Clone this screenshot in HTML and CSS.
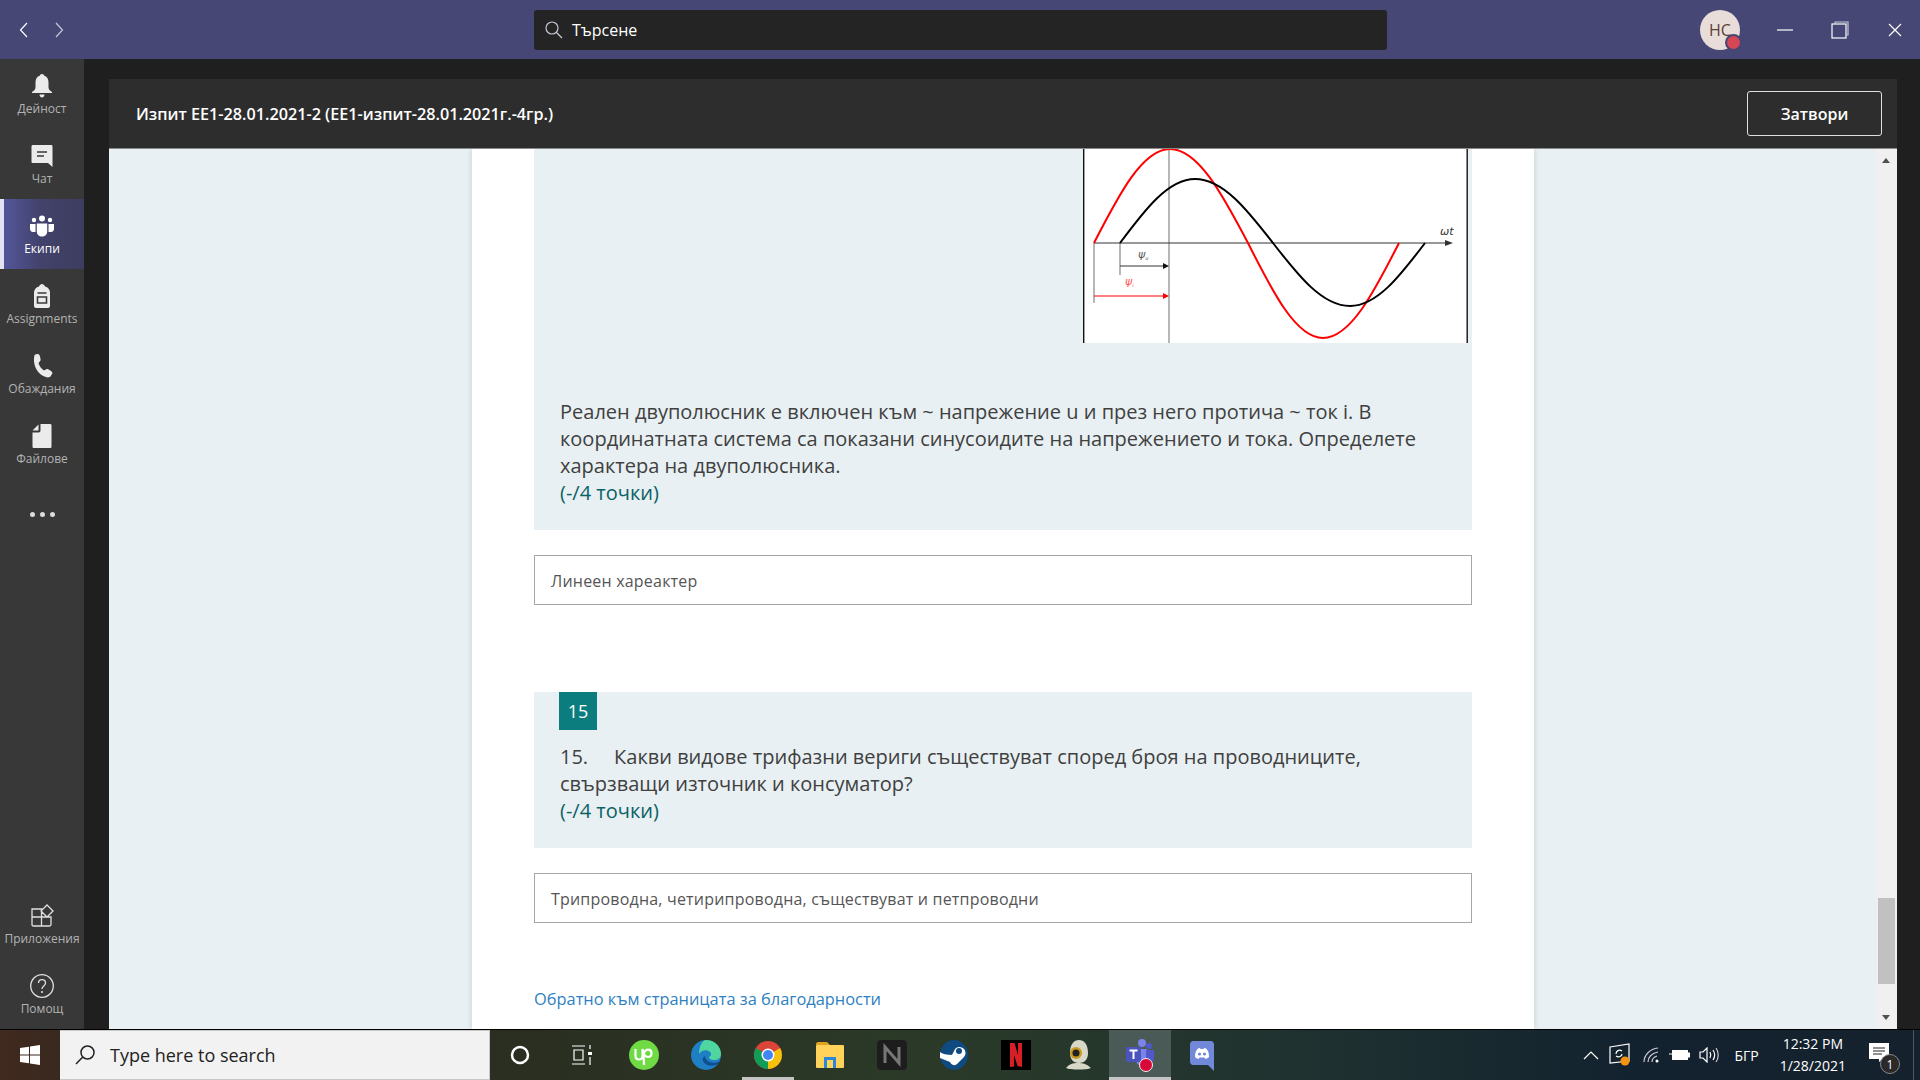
FILE: index.html
```html
<!DOCTYPE html>
<html lang="bg">
<head>
<meta charset="UTF-8">
<meta name="viewport" content="width=device-width, initial-scale=1.0">
<title>Изпит EE1</title>
<link rel="stylesheet" href="styles.css">
</head>
<body>

<!-- Горна лента -->
<header class="topbar">
	<div class="nav-arrows">
		<svg width="12" height="18" viewBox="0 0 12 18"><path d="M9 2 2.5 9 9 16" class="line-white"/></svg>
		<svg width="12" height="18" viewBox="0 0 12 18"><path d="M3 2 9.5 9 3 16" class="line-dim"/></svg>
	</div>
	<div class="search">
		<svg width="20" height="20" viewBox="0 0 20 20"><circle cx="8" cy="8" r="6" class="line-dim"/><path d="M12.5 12.5 18 18" class="line-dim"/></svg>
		<span>Търсене</span>
	</div>
	<div class="avatar">НС<span class="status"></span></div>
	<div class="win-buttons">
		<svg width="16" height="16" viewBox="0 0 16 16"><path d="M0 8H16" class="line-white"/></svg>
		<svg width="18" height="18" viewBox="0 0 18 18"><rect x="1" y="3" width="14" height="14" class="line-white"/><path d="M4 3V1H17V14H15" class="line-dim"/></svg>
		<svg width="16" height="16" viewBox="0 0 16 16"><path d="M2 2 14 14M14 2 2 14" class="line-white"/></svg>
	</div>
</header>

<div class="app">
	<!-- Странична лента -->
	<nav class="sidebar">
		<div class="nav-item">
			<svg class="nav-icon" viewBox="0 0 24 24"><path d="M12 0c1.300 0 2 .8 2 1.500 3 1 4.500 3.500 4.500 7v5c0 2 1.500 3 3.500 4.500v1H2v-1c2-1.500 3.500-2.500 3.500-4.500v-5c0-3.500 1.500-6 4.500-7C10 .8 10.700 0 12 0zM9.500 20.500h5c0 1.500-1 3-2.500 3s-2.500-1.500-2.500-3z" class="fill-icon"/></svg>
			<span>Дейност</span>
		</div>
		<div class="nav-item">
			<svg class="nav-icon" viewBox="0 0 24 24"><path d="M3 1h18c1 0 1.500.5 1.500 1.500V23l-4.500-4H3c-1 0-1.500-.5-1.500-1.500v-15C1.500 1.500 2 1 3 1z" class="fill-icon"/><path d="M7 8h10M7 12h7" class="line-side"/></svg>
			<span>Чат</span>
		</div>
		<div class="nav-item active">
			<svg class="nav-icon" viewBox="0 0 24 24"><circle cx="12" cy="4.500" r="3" fill="#fff"/><circle cx="4" cy="6" r="2.200" fill="#fff"/><circle cx="20" cy="6" r="2.200" fill="#fff"/><path d="M6.800 9.500h10.400v8c0 3-2.300 5-5.200 5s-5.200-2-5.200-5z" fill="#fff"/><path d="M0 10h5.500v8H3c-2 0-3-1.500-3-3zM24 10h-5.500v8H21c2 0 3-1.500 3-3z" fill="#fff"/></svg>
			<span>Екипи</span>
		</div>
		<div class="nav-item">
			<svg class="nav-icon" viewBox="0 0 24 24"><path d="M9 2.500C9.500 1 11 0 12 0s2.500 1 3 2.500c3 .8 5 3 5 6V22c0 1-1 2-2 2H6c-1 0-2-1-2-2V8.500c0-3 2-5.200 5-6z" class="fill-icon"/><path d="M7.500 9h9M7.500 13h9v6h-9z" class="line-side"/></svg>
			<span>Assignments</span>
		</div>
		<div class="nav-item">
			<svg class="nav-icon" viewBox="0 0 24 24"><path d="M5 .5 8 0c1 0 1.500 1 2 2.500.5 2 1 3.500.2 4.500L8.500 9c.5 2.500 3 6 5.500 7.500l2.300-1.300c1-.5 2.500.2 4 1.300 1.500 1 2.500 2 2 3l-1.500 2.500c-1 1.500-3 1.800-5 1C9 21 4.500 14.500 4 7c-.1-2.500 0-5.500 1-6.500z" class="fill-icon"/></svg>
			<span>Обаждания</span>
		</div>
		<div class="nav-item">
			<svg class="nav-icon" viewBox="0 0 24 24"><path d="M10.500 0H20c1 0 1.500.5 1.500 1.500v21c0 1-.5 1.500-1.500 1.500H4c-1 0-1.500-.5-1.500-1.500V8.500h6c1.300 0 2-.7 2-2z" class="fill-icon"/><path d="M8.500 .5v6h-6z" class="fill-icon"/></svg>
			<span>Файлове</span>
		</div>
		<div class="nav-item more"><i></i><i></i><i></i></div>

		<div class="nav-item push">
			<svg class="nav-icon" viewBox="0 0 24 24"><path d="M2 5h9.500v8H2zM2 13h9.500v9H3.500C2.500 22 2 21.500 2 20.500zM11.500 13H21v7.500c0 1-.5 1.500-1.500 1.500h-8zM17 1l6 6-6 6-6-6z" class="line-icon"/></svg>
			<span>Приложения</span>
		</div>
		<div class="nav-item">
			<svg class="nav-icon" viewBox="0 0 24 24"><circle cx="12" cy="12" r="11.300" class="line-icon"/><path d="M8.500 9c0-2 1.500-3.300 3.500-3.300s3.500 1.300 3.500 3.200c0 3-3.500 3-3.500 6" class="line-icon"/><circle cx="12" cy="18" r="1" class="fill-icon"/></svg>
			<span>Помощ</span>
		</div>
	</nav>

	<main class="main">
		<div class="panel">
			<div class="panel-head">
				<div class="panel-title">Изпит EE1-28.01.2021-2 (EE1-изпит-28.01.2021г.-4гр.)</div>
				<button class="close-btn">Затвори</button>
			</div>
			<div class="panel-body">
				<div class="page">
					<div class="card">

						<div class="question">
							<div class="figure">
								<svg width="385" height="194" viewBox="0 0 385 194">
									<path d="M.7 0V194M384.200 0V194" class="fig-frame"/>
									<path d="M86 0V194M11 94V154M37 94V126" class="fig-grid"/>
									<path d="M11 94H365" class="fig-axis"/>
									<path d="M370 94 362 91V97z" fill="#333"/>
									<path d="M37 117H80" class="fig-axis"/>
									<path d="M86 117 80 114V120z" fill="#111"/>
									<path d="M11 147H80" class="fig-red-thin"/>
									<path d="M86 147 80 144V150z" fill="#f00"/>
									<path d="M11 94C35.800 45.800 59.500 0 87 0 115.200 0 139.600 45.800 165 94 189.500 142.700 212.900 189 240 189 267.500 189 291.200 142.700 316 94" class="fig-red"/>
									<path d="M37 94C61.500 61.200 84.900 30 112 30 140.200 30 164.600 61.200 190 94 215.100 126.300 239.100 157 267 157 294.100 157 317.500 126.300 342 94" class="fig-black"/>
									<text x="55" y="109" class="fig-label">ψ<tspan class="fig-sub" dy="2">u</tspan></text>
									<text x="42" y="136" class="fig-label fig-label-red">ψ<tspan class="fig-sub" dy="2">i</tspan></text>
									<text x="357" y="86" class="fig-wt">ωt</text>
								</svg>
							</div>
							<div class="q-text q-text-first">
								Реален двуполюсник е включен към ~ напрежение u и през него протича ~ ток i. В координатната система са показани синусоидите на напрежението и тока. Определете характера на двуполюсника.
								<div class="points">(-/4 точки)</div>
							</div>
						</div>
						<div class="answer">Линеен хареактер</div>

						<div class="question question-two">
							<div class="badge">15</div>
							<div class="q-text">
								15.&nbsp;&nbsp;&nbsp;&nbsp; Какви видове трифазни вериги съществуват според броя на проводниците, свързващи източник и консуматор?
								<div class="points">(-/4 точки)</div>
							</div>
						</div>
						<div class="answer">Трипроводна, четирипроводна, съществуват и петпроводни</div>

						<a class="back-link" href="#">Обратно към страницата за благодарности</a>
					</div>
				</div>
				<div class="scrollbar">
					<span class="arrow-up"></span>
					<span class="thumb"></span>
					<span class="arrow-down"></span>
				</div>
			</div>
		</div>
	</main>
</div>

<!-- Лента на задачите -->
<footer class="taskbar">
	<div class="start">
		<svg width="20" height="20" viewBox="0 0 20 20"><path d="M0 3 9 1.700V9.500H0zM10 1.500 20 0V9.500H10zM0 10.500H9V18.300L0 17zM10 10.500H20V20L10 18.500z" fill="#fff"/></svg>
	</div>
	<div class="task-search">
		<svg width="22" height="22" viewBox="0 0 22 22"><circle cx="13.500" cy="8.500" r="6.500" class="line-dark"/><path d="M8.800 13 2 20" class="line-dark"/></svg>
		<span>Type here to search</span>
	</div>
	<div class="task-icons">
		<div class="task-icon">
			<svg width="22" height="22" viewBox="0 0 22 22"><circle cx="11" cy="11" r="8" fill="none" stroke="#fff" stroke-width="2.500"/></svg>
		</div>
		<div class="task-icon">
			<svg width="22" height="22" viewBox="0 0 22 22"><path d="M1 2H14M1 20H14M3 6H12V16H3zM19 1V5M19 13V21" class="line-white"/><rect x="17" y="8" width="4" height="3" fill="#fff"/></svg>
		</div>
		<div class="task-icon">
			<svg width="30" height="30" viewBox="0 0 30 30"><circle cx="15" cy="15" r="15" fill="#6fda44"/><path d="M6.500 9v6.500c0 2.500 1.500 4 3.500 4s3.500-1.500 3.500-4V9c.8 5 3 8 5.500 8 2.200 0 3.500-1.700 3.500-3.700s-1.300-3.600-3.300-3.600c-2.500 0-4 2-4.700 5L15 25" fill="none" stroke="#fff" stroke-width="2.200"/></svg>
		</div>
		<div class="task-icon">
			<svg width="30" height="30" viewBox="0 0 30 30"><circle cx="15" cy="15" r="15" fill="#1e7fc4"/><path d="M15 0c8 0 15 6 15 14 0 4-3 6-7 6-3 0-5-1-5-3 2-1 3-3 1-5-3-3-9-2-11 2C8 7 11 0 15 0z" fill="#4fd6a0"/><path d="M12 21c2 4 7 6 13 4 2-1 3-2 4-4-3 2-7 2-10 1-3-1-5-3-5-6-2 1-3 3-2 5z" fill="#0f4f8f"/></svg>
		</div>
		<div class="task-icon underlined">
			<svg width="28" height="28" viewBox="0 0 28 28"><circle cx="14" cy="14" r="14" fill="#db4437"/><path d="M14 14 26.100 7A14 14 0 0 1 14 28z" fill="#f4c20d"/><path d="M14 14 14 28A14 14 0 0 1 1.900 7z" fill="#0f9d58"/><circle cx="14" cy="14" r="6.500" fill="#fff"/><circle cx="14" cy="14" r="5" fill="#4285f4"/></svg>
		</div>
		<div class="task-icon">
			<svg width="28" height="26" viewBox="0 0 28 26"><path d="M0 2C0 1 1 0 2 0H11L14 3H0z" fill="#e0a520"/><rect y="3" width="28" height="23" rx="1" fill="#ffd25a"/><path d="M8 26V15H20V26H17V18H11V26z" fill="#2b88d8"/></svg>
		</div>
		<div class="task-icon">
			<svg width="30" height="30" viewBox="0 0 30 30"><rect width="30" height="30" rx="4" fill="#1d1d1d"/><path d="M8 23V7L22 23V7" fill="none" stroke="#777" stroke-width="3"/></svg>
		</div>
		<div class="task-icon">
			<svg width="28" height="30" viewBox="0 0 28 30"><ellipse cx="14" cy="15" rx="14" ry="15" fill="#0f4a80"/><path d="M0 18 10 22C12 26 16 26 18 23L24 17A6 6 0 1 0 15 9L12 15C9 14 6 16 0 12z" fill="#fff"/><circle cx="19" cy="11" r="3" fill="#0f4a80"/></svg>
		</div>
		<div class="task-icon">
			<svg width="30" height="30" viewBox="0 0 30 30"><rect width="30" height="30" fill="#000"/><path d="M9 3H13.500L17 15V3H21V27L16.500 26 13 15V26.500L9 27z" fill="#d81f26"/></svg>
		</div>
		<div class="task-icon">
			<svg width="30" height="32" viewBox="0 0 30 32"><path d="M7 14C7 5 11 1 16 1s9 4 9 13c0 6-3 10-9 10S7 20 7 14zM3 29c3-4 7-5 12-5s9 1 13 5c-4 2-21 2-25 0z" fill="#d8d8c8"/><circle cx="13" cy="14" r="6" fill="#c89a20"/><circle cx="13" cy="14" r="3.500" fill="#222"/></svg>
		</div>
		<div class="task-icon running underlined">
			<svg width="30" height="34" viewBox="0 0 30 34"><circle cx="17" cy="5" r="4" fill="#7b83eb"/><circle cx="24" cy="8" r="3" fill="#5059c9"/><path d="M11 11H22V24C22 27 19 29 16 28 13 27 11 25 11 22z" fill="#7b83eb"/><path d="M21 12H29V20C29 23 27 25 24 24L21 23z" fill="#5059c9"/><rect x="1" y="9" width="15" height="15" rx="1" fill="#4b53bc"/><path d="M4.500 12.500H12.500M8.500 12.500V21" stroke="#fff" stroke-width="2"/><circle cx="21" cy="27" r="6.500" fill="#d8073a" stroke="#eee" stroke-width="1"/></svg>
		</div>
		<div class="task-icon">
			<svg width="24" height="32" viewBox="0 0 24 32"><path d="M3 2H21C22.500 2 24 3.500 24 5V32L18 26H3C1.500 26 0 24.500 0 23V5C0 3.500 1.500 2 3 2z" fill="#7289da"/><path d="M5 18C5 14 6 11 8 9.500L10 9 10.500 10H13.500L14 9 16 9.500C18 11 19 14 19 18 18 19 16.500 19.800 15.500 20L14.500 18.500H9.500L8.500 20C7.500 19.800 6 19 5 18z" fill="#fff"/><circle cx="9.500" cy="15" r="1.600" fill="#7289da"/><circle cx="14.500" cy="15" r="1.600" fill="#7289da"/></svg>
		</div>
	</div>
	<div class="tray">
		<svg class="tray-chevron" width="16" height="9" viewBox="0 0 16 9"><path d="M1 8 8 1 15 8" class="line-white"/></svg>
		<svg class="tray-sync" width="22" height="24" viewBox="0 0 22 24"><path d="M1 4 20 1V18L1 20z" class="line-white"/><path d="M7 11C7 8 10 6 13 8M13 11C13 13 10 15 7 13" class="line-white"/><circle cx="16" cy="18" r="4.500" fill="#f7930e"/></svg>
		<svg class="tray-wifi" width="18" height="16" viewBox="0 0 18 16"><path d="M1 15C1 8 7 2 15 1M5 15C5 10 9 6 15 5M9 15C9 12 11 10 14 9" class="line-dim"/><circle cx="14" cy="14" r="1.500" fill="#fff"/></svg>
		<svg class="tray-batt" width="21" height="12" viewBox="0 0 21 12"><rect x="3.500" y="1.500" width="15" height="9" fill="#fff" stroke="#fff"/><path d="M19 4H21V8H19zM0 5H3" fill="#fff" stroke="#fff"/></svg>
		<svg class="tray-vol" width="20" height="16" viewBox="0 0 20 16"><path d="M1 5H4L8 1V15L4 11H1z" class="line-white"/><path d="M11 5C12 7 12 9 11 11M14 3C16 6 16 10 14 13" class="line-white"/><path d="M17 1C20 5 20 11 17 15" class="line-dim"/></svg>
		<span class="tray-lang">БГР</span>
		<div class="clock"><span>12:32 PM</span><span>1/28/2021</span></div>
		<div class="notify">
			<svg width="20" height="20" viewBox="0 0 20 20"><path d="M0 0H20V16H14L10 19V16H0z" fill="#fff"/><path d="M4 5H16M4 8H16M4 11H13" stroke="#222" stroke-width="1"/></svg>
			<span class="notify-count">1</span>
		</div>
	</div>
</footer>

</body>
</html>
```

FILE: styles.css
```css
* {
	box-sizing: border-box;
}
html, body {
	margin: 0;
	height: 100%;
}
body {
	width: 1920px;
	height: 1080px;
	overflow: hidden;
	display: flex;
	flex-direction: column;
	font-family: "Open Sans", "Noto Sans", sans-serif;
	background-color: #1f1f1f;
}

/* common svg strokes */
.line-white {
	fill: none;
	stroke: #fff;
	stroke-width: 1.2;
}
.line-dim {
	fill: none;
	stroke: #c8c8d8;
	stroke-width: 1.2;
}
.line-dark {
	fill: none;
	stroke: #222;
	stroke-width: 1.5;
}
.line-icon {
	fill: none;
	stroke: #e0e0e0;
	stroke-width: 1.3;
}
.line-side {
	fill: none;
	stroke: #3a3a3a;
	stroke-width: 1.6;
}
.fill-icon {
	fill: #ebebeb;
}

/* top bar */
.topbar {
	height: 59px;
	flex: none;
	display: flex;
	align-items: center;
	background-color: #464775;
	position: relative;
}
.nav-arrows {
	display: flex;
	gap: 23px;
	margin-left: 18px;
}
.search {
	margin-left: 469px;
	width: 853px;
	height: 40px;
	background-color: #242424;
	border-radius: 3px;
	display: flex;
	align-items: center;
	gap: 8px;
	padding-left: 10px;
	color: #fff;
	font-size: 16px;
}
.avatar {
	margin-left: 313px;
	width: 40px;
	height: 40px;
	border-radius: 50%;
	background-color: #e8ddd8;
	color: #5a3f38;
	font-size: 16px;
	display: flex;
	align-items: center;
	justify-content: center;
	position: relative;
}
.status {
	position: absolute;
	right: -2px;
	bottom: -1px;
	width: 17px;
	height: 17px;
	border-radius: 50%;
	background-color: #d74654;
	border: 2px solid #464775;
}
.win-buttons {
	display: flex;
	align-items: center;
	margin-left: 37px;
	gap: 38px;
}

/* app */
.app {
	flex: 1;
	display: flex;
	min-height: 0;
}
.sidebar {
	width: 84px;
	flex: none;
	display: flex;
	flex-direction: column;
	background-color: #383838;
}
.nav-item {
	height: 70px;
	flex: none;
	display: flex;
	flex-direction: column;
	align-items: center;
	padding-top: 15px;
	font-size: 12px;
	line-height: 16px;
	color: #b3b3b3;
}
.nav-item.active {
	color: #fff;
	border-left: 4px solid #e4e2f5;
	padding-right: 4px;
	background: linear-gradient(90deg, #55569a, #42426c 45%, #3d3d5e);
}
.nav-icon {
	width: 24px;
	height: 24px;
	margin-bottom: 3px;
	flex: none;
}
.nav-item.more {
	flex-direction: row;
	justify-content: center;
	align-items: center;
	gap: 5px;
	padding-top: 0;
}
.more i {
	width: 5px;
	height: 5px;
	border-radius: 50%;
	background-color: #dcdcdc;
}
.push {
	margin-top: auto;
}

.main {
	flex: 1;
	min-width: 0;
	padding: 20px 23px 0 25px;
}
.panel {
	height: 100%;
	display: flex;
	flex-direction: column;
}
.panel-head {
	height: 70px;
	flex: none;
	background-color: #2d2d2d;
	border-bottom: 1px solid #8a8a8a;
	display: flex;
	align-items: center;
	justify-content: space-between;
	padding: 0 15px 0 27px;
}
.panel-title {
	color: #fff;
	font-size: 16.200px;
	font-weight: 600;
}
.close-btn {
	width: 135px;
	height: 45px;
	background-color: #2d2d2d;
	border: 1px solid #e0e0e0;
	border-radius: 3px;
	color: #fff;
	font-family: inherit;
	font-size: 16px;
	font-weight: 600;
}
.panel-body {
	flex: 1;
	min-height: 0;
	display: flex;
	background-color: #e8f0f3;
}
.page {
	flex: 1;
	min-width: 0;
	overflow: hidden;
	padding-left: 363px;
}
.card {
	width: 1062px;
	height: 100%;
	background-color: #fff;
	padding: 0 62px;
	box-shadow: 0 0 6px rgba(0, 0, 0, 0.15);
}
.question {
	background-color: #e8f0f3;
	padding-bottom: 24px;
}
.question-two {
	margin-top: 87px;
}
.figure {
	display: flex;
	justify-content: flex-end;
	padding-right: 4px;
	height: 194px;
}
.figure svg {
	background-color: #fff;
	display: block;
}
.fig-frame {
	fill: none;
	stroke: #111;
	stroke-width: 1.4;
}
.fig-grid {
	fill: none;
	stroke: #888;
	stroke-width: 1.2;
}
.fig-axis {
	fill: none;
	stroke: #333;
	stroke-width: 1;
}
.fig-red {
	fill: none;
	stroke: #f00;
	stroke-width: 2;
}
.fig-red-thin {
	fill: none;
	stroke: #f00;
	stroke-width: 1;
}
.fig-black {
	fill: none;
	stroke: #000;
	stroke-width: 2;
}
.fig-label {
	font-family: "DejaVu Sans", sans-serif;
	font-size: 11px;
	font-style: italic;
	fill: #555;
}
.fig-label-red {
	fill: #f55;
}
.fig-sub {
	font-size: 5px;
}
.fig-wt {
	font-family: "DejaVu Sans", sans-serif;
	font-size: 11px;
	font-style: italic;
	fill: #333;
}
.q-text {
	padding: 0 26px;
	margin-top: 13px;
	font-size: 20px;
	line-height: 27px;
	color: #404040;
}
.q-text-first {
	margin-top: 55px;
}
.points {
	color: #0b6266;
}
.badge {
	margin-left: 25px;
	width: 38px;
	height: 38px;
	background-color: #0b7d7e;
	color: #fff;
	font-size: 18px;
	display: flex;
	align-items: center;
	justify-content: center;
}
.answer {
	margin-top: 25px;
	height: 50px;
	border: 1px solid #a6a6a6;
	background-color: #fff;
	display: flex;
	align-items: center;
	padding: 2px 0 0 16px;
	font-size: 16px;
	letter-spacing: 0.200px;
	color: #555;
}
.back-link {
	display: block;
	margin-top: 64px;
	font-size: 16.400px;
	line-height: 24px;
	color: #2f7fc1;
	text-decoration: none;
}

/* scrollbar */
.scrollbar {
	width: 21px;
	flex: none;
	background-color: #f0f0f0;
	display: flex;
	flex-direction: column;
	align-items: center;
	position: relative;
}
.arrow-up,
.arrow-down {
	position: absolute;
	left: 6px;
	width: 0;
	height: 0;
	border-left: 4.500px solid transparent;
	border-right: 4.500px solid transparent;
}
.arrow-up {
	top: 9px;
	border-bottom: 5px solid #505050;
}
.arrow-down {
	bottom: 9px;
	border-top: 5px solid #505050;
}
.thumb {
	position: absolute;
	left: 2px;
	bottom: 45px;
	width: 17px;
	height: 86px;
	background-color: #c1c1c1;
}

/* taskbar */
.taskbar {
	height: 51px;
	flex: none;
	display: flex;
	align-items: stretch;
	border-top: 1px solid #000;
	background: linear-gradient(90deg, #41291f 0, #33291f 5%, #2a2f21 28%, #2b3a28 48%, #1f3230 68%, #13222f 85%, #15222e 100%);
}
.start {
	width: 60px;
	display: flex;
	align-items: center;
	justify-content: center;
}
.task-search {
	width: 430px;
	background-color: #f2f2f2;
	border: 1px solid #c8c8c8;
	border-width: 1px 1px 1px 0;
	display: flex;
	align-items: center;
	padding-left: 14px;
	gap: 14px;
	font-size: 18px;
	color: #222;
}
.task-icons {
	display: flex;
	margin-left: -1px;
}
.task-icon {
	width: 62px;
	display: flex;
	align-items: center;
	justify-content: center;
	position: relative;
}
.underlined::after {
	content: "";
	position: absolute;
	left: 5px;
	right: 5px;
	bottom: 0;
	height: 3px;
	background-color: #c4c4c4;
}
.running {
	background-color: #4a5a56;
}
.running.underlined::after {
	left: 0;
	right: 0;
}
.tray {
	margin-left: auto;
	display: flex;
	align-items: center;
	color: #fff;
	font-size: 14px;
	padding-right: 6px;
}
.tray-chevron {
	margin-right: 10px;
}
.tray-sync {
	margin-right: 12px;
}
.tray-wifi {
	margin-right: 8px;
}
.tray-batt {
	margin-right: 9px;
}
.tray-vol {
	margin-right: 15px;
}
.tray-lang {
	margin-right: 21px;
}
.clock {
	display: flex;
	flex-direction: column;
	align-items: center;
	line-height: 22px;
	margin-right: 14px;
	font-size: 14px;
}
.notify {
	width: 54px;
	height: 100%;
	position: relative;
	border-right: 1px solid #555;
	display: flex;
	align-items: center;
	padding-left: 9px;
	padding-bottom: 5px;
}
.notify-count {
	position: absolute;
	left: 20px;
	bottom: 6px;
	width: 20px;
	height: 20px;
	border-radius: 50%;
	background-color: #2a2a2a;
	border: 1px solid #888;
	display: flex;
	align-items: center;
	justify-content: center;
	font-size: 12px;
}
```
